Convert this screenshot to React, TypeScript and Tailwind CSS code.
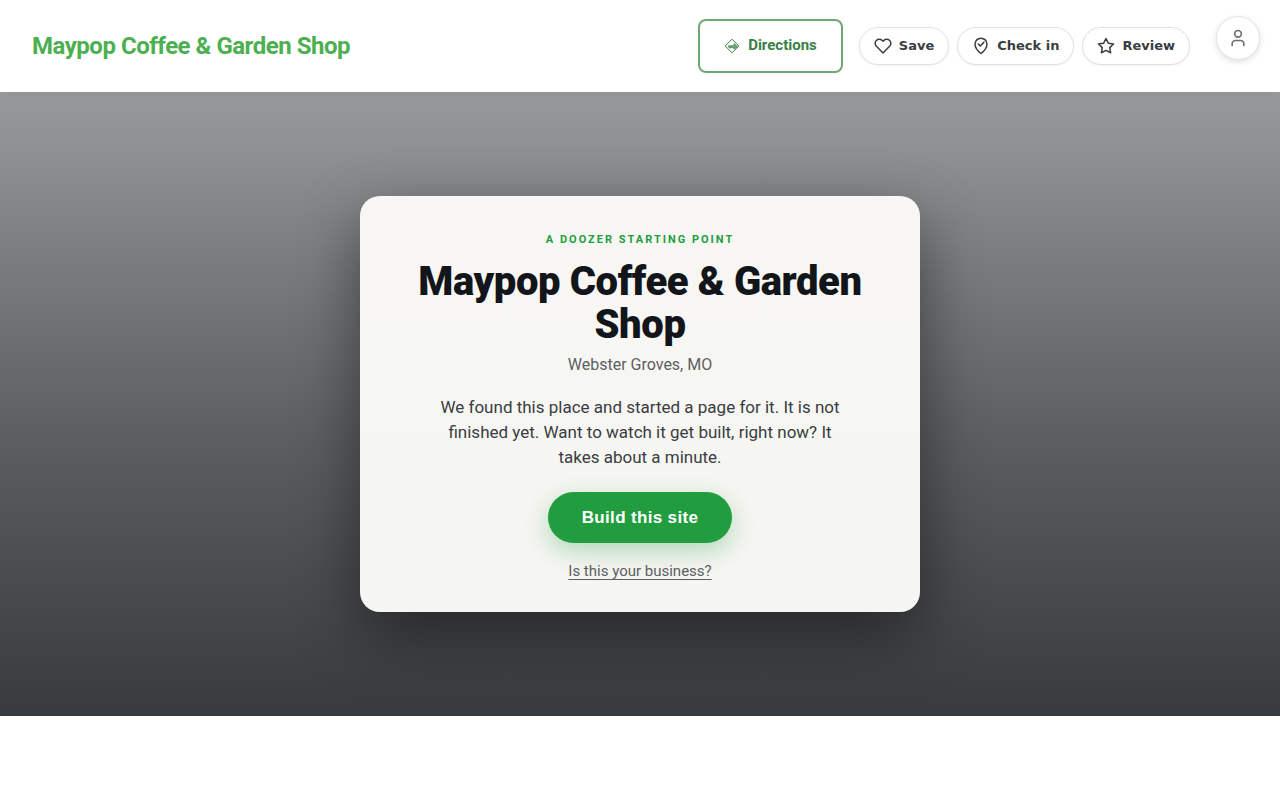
import type { ReactNode } from "react";
import { User } from "lucide-react";

function DirectionsIcon() {
  return (
    <svg width="16" height="16" viewBox="0 0 16 16" fill="none" stroke="currentColor" aria-hidden="true">
      <path d="M8 1.2 14.8 8 8 14.8 1.2 8Z" strokeWidth="1" strokeLinejoin="round" />
      <path d="M4.4 7.8h5.8V5.6L13.4 8.6 10.2 11.2V9.8H5Z" fill="currentColor" fillOpacity="0.7" strokeWidth="0.7" strokeLinejoin="round" />
    </svg>
  );
}

function ActionIcon({ children }: { children: ReactNode }) {
  return (
    <svg width="18" height="18" viewBox="0 0 24 24" fill="none" stroke="currentColor" strokeWidth="2" strokeLinecap="round" strokeLinejoin="round" aria-hidden="true">
      {children}
    </svg>
  );
}

const actions = [
  {
    label: "Save",
    icon: (
      <path d="M20.84 4.61a5.5 5.5 0 0 0-7.78 0L12 5.67l-1.06-1.06a5.5 5.5 0 0 0-7.78 7.78l1.06 1.06L12 21.23l7.78-7.78 1.06-1.06a5.5 5.5 0 0 0 0-7.78Z" />
    ),
  },
  {
    label: "Check in",
    icon: (
      <>
        <path d="M12 22s8-6.5 8-12.5a8 8 0 1 0-16 0C4 15.5 12 22 12 22Z" />
        <path d="m8.5 9.5 2.5 2.5 4.8-4.8" />
      </>
    ),
  },
  {
    label: "Review",
    icon: <path d="m12 2 3.09 6.26L22 9.27l-5 4.87 1.18 6.88L12 17.77l-6.18 3.25L7 14.14 2 9.27l6.91-1.01Z" />,
  },
];

function Header() {
  return (
    <header className="relative z-10 flex min-h-[92px] items-center bg-white pl-8 pr-5 shadow-[0_2px_16px_rgba(0,0,0,0.06)]">
      <a href="/" className="text-2xl font-bold tracking-[-0.02em] text-[#4caf50]">
        Maypop Coffee &amp; Garden Shop
      </a>

      <div className="ml-auto flex items-center gap-4">
        <a
          href="/directions"
          className="flex h-[54px] items-center gap-2 rounded-lg border-2 border-[#6fa877] px-6 text-[15px] font-bold text-[#388044]"
        >
          <DirectionsIcon />
          <span className="pb-0.5">Directions</span>
        </a>
        <div className="flex items-center gap-2 font-['DejaVu_Sans',sans-serif]">
          {actions.map((action) => (
            <button
              key={action.label}
              className="flex h-[38px] items-center gap-[7px] rounded-full border border-[#e0e1e3] bg-white px-3.5 text-[13px] font-bold text-[#3a3d42] shadow-[0_1px_2px_rgba(0,0,0,0.05)]"
            >
              <ActionIcon>{action.icon}</ActionIcon>
              {action.label}
            </button>
          ))}
        </div>
      </div>

      <button
        aria-label="Account"
        className="ml-[26px] mt-4 flex size-11 items-center justify-center self-start rounded-full border border-[#e3e4e6] bg-white text-[#6b6e73] shadow-[0_2px_6px_rgba(0,0,0,0.12)]"
      >
        <User size={20} />
      </button>
    </header>
  );
}

export default function App() {
  return (
    <div className="min-h-screen bg-white font-[Roboto,sans-serif]">
      <Header />

      <main className="flex min-h-[78vh] items-center justify-center bg-linear-to-b from-[#999a9b] via-[#5c5e62] via-55% to-[#383b3d] px-6 py-16">
        <section className="flex w-full max-w-[560px] flex-col items-center rounded-[20px] bg-linear-to-b from-[#f8f7f4] to-[#f5f5f1] px-10 pb-[29px] pt-9 text-center shadow-[0_24px_64px_rgba(0,0,0,0.45)]">
          <p className="text-[11px] font-bold uppercase leading-[15px] tracking-[2px] text-[#219d3f]">
            A Doozer starting point
          </p>
          <h1 className="mt-[13px] text-[40px] font-black leading-[43px] tracking-[-0.01em] text-[#12151a]">
            Maypop Coffee &amp; Garden Shop
          </h1>
          <p className="mt-[7px] text-base leading-6 text-[#5c5f63]">Webster Groves, MO</p>
          <p className="mt-[18px] max-w-[420px] text-[17px] leading-[25px] text-[#3a3d42]">
            We found this place and started a page for it. It is not finished yet. Want to watch it get built, right now? It takes about a minute.
          </p>
          <button className="mt-[22px] h-[51px] rounded-full bg-[#219d3f] px-[34px] font-['Liberation_Sans',sans-serif] text-[17px] font-bold tracking-[0.02em] text-white shadow-[0_8px_24px_rgba(33,157,63,0.32)]">
            Build this site
          </button>
          <a href="/claim" className="mt-4 text-[15px] leading-6 text-[#5c5f63] underline underline-offset-3">
            Is this your business?
          </a>
        </section>
      </main>
    </div>
  );
}
